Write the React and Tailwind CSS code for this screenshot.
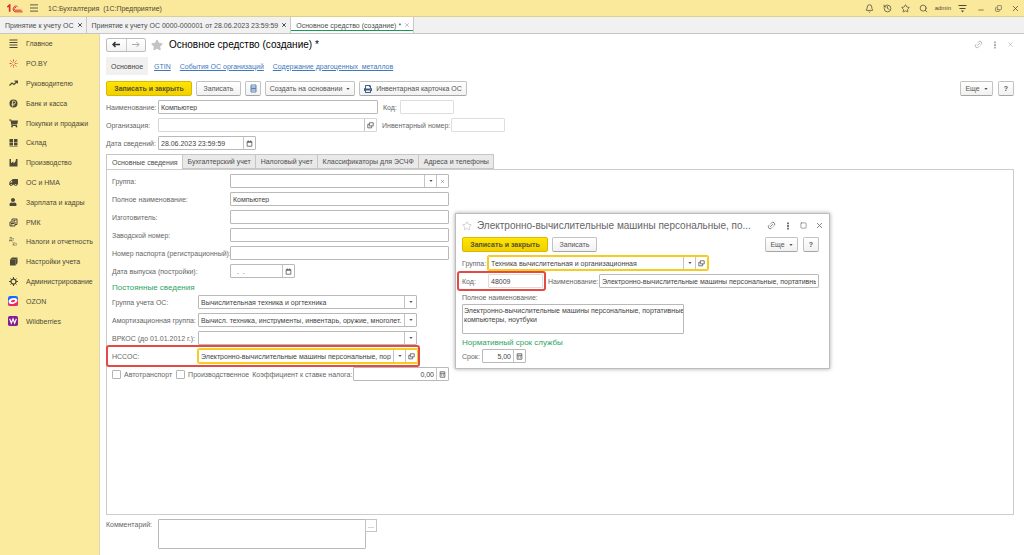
import { useState } from "react";
import { FaShoppingCart, FaTruck, FaUser, FaStar, FaPrint } from "react-icons/fa";
import { Bell, History, Star, Search, Link2, X, Minus, Square, Copy } from "lucide-react";

const input = "w-0 min-w-0 flex-1 h-full bg-transparent px-[2px] text-[#444] outline-none";
const box = "flex h-[14px] min-w-0 items-stretch overflow-hidden rounded-[1px] border border-[#b9b9b9] bg-white";
const btn = "flex h-[15px] items-center justify-center gap-1 rounded-[2px] border border-[#c2c2c2] border-b-[#a5a5a5] bg-gradient-to-b from-white to-[#f1f1f1] text-[#555]";
const yellowBtn = "flex h-[15px] items-center justify-center rounded-[2px] border border-[#d8b900] bg-gradient-to-b from-[#ffe500] to-[#f0d000] font-bold text-[#5a5030]";

const Svg = ({ children, className = "size-[9px]", view = "0 0 18 18", ...rest }) => (
  <svg viewBox={view} className={className} fill="none" stroke="currentColor" strokeWidth="2" aria-hidden="true" {...rest}>{children}</svg>
);

const Logo = () => (
  <Svg view="0 0 48 26" className="h-[9px] w-[16px] text-[#d8322c]" strokeWidth="3">
    <path d="M1 9l7-6v20" strokeWidth="5" />
    <path d="M32 8a8 9 0 1 0-8 15h23M27 10a4 4 0 1 0-3 8h20" />
  </Svg>
);

const OpenIcon = () => (
  <Svg className="size-[7px]"><path d="M6 2h10v8H6zM6 6H2v9h10v-5" /></Svg>
);
const Caret = () => (
  <Svg view="0 0 8 5" className="h-[2px] w-[4px]" stroke="none"><path d="M0 0h8L4 5z" fill="#555" /></Svg>
);
const CalendarIcon = () => (
  <Svg className="size-[7px]"><path d="M3 4h12v12H3zM3 6h12M6 1v4M12 1v4" /></Svg>
);
const CalcIcon = () => (
  <Svg className="size-[7px]"><path d="M3 2h12v14H3zM3 6h12M6 9h2M10 9h2M6 12h2M10 12h2" /></Svg>
);
const Dots = () => (
  <Svg view="0 0 4 18" className="h-[8px] w-[2px]" stroke="none" fill="currentColor"><path d="M0 1h4v4H0zM0 7h4v4H0zM0 13h4v4H0z" /></Svg>
);

const sections = [
  { name: "Главное", icon: <Svg><path d="M1 2h16M1 7h16M1 12h16M1 17h16" /></Svg> },
  { name: "PO.BY", icon: <Svg className="size-[9px] text-[#dc5140]"><path d="M9 1v5M9 12v5M1 9h5M12 9h5M3 3l4 4M15 3l-4 4M3 15l4-4M15 15l-4-4" strokeDasharray="3 1" /></Svg> },
  { name: "Руководителю", icon: <Svg><path d="M1 13l5-5 4 3 6-6M11 4h6v5" strokeWidth="2.5" /></Svg> },
  { name: "Банк и касса", icon: <Svg><circle cx="9" cy="9" r="8" fill="currentColor" stroke="none" /><path d="M7 15V4h3a3 3 0 0 1 0 6H5M5 12h6" stroke="#fbeb9e" strokeWidth="1.5" /></Svg> },
  { name: "Покупки и продажи", icon: <FaShoppingCart className="size-[9px]" /> },
  { name: "Склад", icon: <Svg stroke="none" fill="currentColor"><path d="M1 2h7v6H1zM10 2h7v6h-7zM1 9h7v6H1zM10 9h7v6h-7zM1 16h16v1H1z" /></Svg> },
  { name: "Производство", icon: <Svg stroke="none" fill="currentColor"><path d="M1 17V2h3v8l5-3v4l4-4 1-5h3v15z" /></Svg> },
  { name: "ОС и НМА", icon: <FaTruck className="size-[9px] -scale-x-100" /> },
  { name: "Зарплата и кадры", icon: <FaUser className="size-[8px]" /> },
  { name: "РМК", icon: <Svg><path d="M2 8h10v8H2zM6 7V2h10v11h-4M9 5h4M4 11h6M4 14h3" /></Svg> },
  { name: "Налоги и отчетность", icon: <Svg className="size-[9px]" stroke="none" fill="currentColor"><text x="0" y="8" fontSize="9">Дт</text><text x="7" y="17" fontSize="9">Кт</text></Svg> },
  { name: "Настройки учета", icon: <Svg stroke="none" fill="currentColor"><path d="M2 5l4-4h11v11l-4 5H2z" /><path d="M3 5h10v11M13 5l3-3" stroke="#9b905f" strokeWidth="1" fill="none" /></Svg> },
  { name: "Администрирование", icon: <Svg><circle cx="9" cy="9" r="5" strokeWidth="2.5" /><path d="M9 0v4M9 14v4M0 9h4M14 9h4M3 3l2 2M13 13l2 2M3 15l2-2M13 5l2-2" /></Svg> },
  { name: "OZON", icon: <Svg className="size-[10px]" stroke="none"><rect width="18" height="18" rx="4" fill="#1769ff" /><path d="M0 12L18 6v8a4 4 0 0 1-4 4H4a4 4 0 0 1-4-4z" fill="#f3265f" /><ellipse cx="9" cy="9" rx="8" ry="5" fill="#fff" transform="rotate(-15 9 9)" /><ellipse cx="9" cy="9" rx="4" ry="2" fill="#f3265f" transform="rotate(-15 9 9)" /></Svg> },
  { name: "Wildberries", icon: <Svg className="size-[10px]"><rect width="18" height="18" rx="3" fill="#851f8d" stroke="none" /><path d="M3 5l3 8 3-8 3 8 3-8" stroke="#fff" /></Svg> },
];

const openWindows = [
  { title: "Принятие к учету ОС" },
  { title: "Принятие к учету ОС 0000-000001 от 28.06.2023 23:59:59" },
  { title: "Основное средство (создание) *", active: true },
];

const tabs = ["Основные сведения", "Бухгалтерский учет", "Налоговый учет", "Классификаторы для ЭСЧФ", "Адреса и телефоны"];

const InnerButton = ({ label, children }) => (
  <button aria-label={label} className="flex w-[12px] shrink-0 items-center justify-center border-l border-[#c4c4c4] text-[#555]">{children}</button>
);

const Field = ({ id, label, labelWidth = "", width = "flex-1", value = "", frame = "border-[#b9b9b9]", inputClass = "", children }) => (
  <div className="flex h-[14px] items-center">
    <label htmlFor={id} className={`shrink-0 ${labelWidth}`}>{label}</label>
    <div className={`${box} ${width} ${frame}`}>
      <input id={id} defaultValue={value} className={`${input} ${inputClass}`} />
      {children}
    </div>
  </div>
);

const TopBar = () => (
  <header className="flex h-[17px] items-center border-b border-[#ddcf8d] bg-[#fbe99b] pl-[7px] pr-[4px] text-[#4d4838]">
    <Logo />
    <button aria-label="Меню" className="ml-[7px]"><Svg className="size-[8px]" strokeWidth="2"><path d="M0 2h18M0 9h18M0 16h18" /></Svg></button>
    <span className="ml-[10px]">1С:Бухгалтерия&nbsp; (1С:Предприятие)</span>
    <div className="ml-auto flex items-center gap-[9px]">
      <button aria-label="Уведомления"><Bell className="size-[9px]" /></button>
      <button aria-label="История"><History className="size-[9px]" /></button>
      <button aria-label="Избранное"><Star className="size-[9px]" /></button>
      <button aria-label="Поиск"><Search className="size-[9px]" /></button>
      <span className="-mx-[2px] text-[6px]">admin</span>
      <button aria-label="Настройки"><Svg><path d="M1 3h16M3 9h12" /><path d="M6 13h6l-3 4z" fill="currentColor" stroke="none" /></Svg></button>
      <button aria-label="Свернуть" className="ml-[1px] pt-1"><Minus className="size-[8px]" /></button>
      <button aria-label="Развернуть" className="ml-[1px]"><Copy className="size-[7px] -scale-y-100" /></button>
      <button aria-label="Закрыть"><X className="size-[9px]" /></button>
    </div>
  </header>
);

const WindowTabs = () => (
  <nav className="flex h-[17px] border-b border-[#c6c6c6] bg-[#f1f1f1] text-[#4d4d4d]">
    {openWindows.map((w) => (
      <div key={w.title} className={`flex items-center gap-[3px] border-r border-[#c9c9c9] pl-[5px] pr-[3px] ${w.active ? "bg-white shadow-[inset_0_-2px_0_#fff,inset_0_-3px_0_#189a55]" : ""}`}>
        <button>{w.title}</button>
        <button aria-label="Закрыть вкладку"><X className={`size-[6px] ${w.active ? "text-[#888]" : ""}`} strokeWidth={w.active ? 2 : 4} /></button>
      </div>
    ))}
  </nav>
);

const Sidebar = () => (
  <aside className="w-[100px] shrink-0 border-r border-[#ddd7b5] bg-[#fbeb9e]">
    <ul className="flex h-[297px] flex-col text-[#4d4838]">
      {sections.map((s) => (
        <li key={s.name} className="flex flex-1 items-center">
          <button className="flex items-center whitespace-nowrap pl-[8px]">
            <span className="mr-[8px] flex w-[10px] justify-center">{s.icon}</span>
            {s.name}
          </button>
        </li>
      ))}
    </ul>
  </aside>
);

const ClassifierDialog = () => (
  <section role="dialog" aria-label="Классификатор" className="absolute left-[355px] top-[179px] w-[375px] border border-[#bdbdbd] bg-white pb-[5px] pl-[6px] pr-[10px] shadow-[0_0_4px_rgba(0,0,0,0.35)]">
    <div className="-mr-[5px] flex h-[23px] items-center text-[#666]">
      <Star className="mr-[5px] size-[10px] shrink-0 text-[#999]" strokeWidth={1} />
      <h2 className="whitespace-nowrap text-[10px] leading-[14px]">Электронно-вычислительные машины персональные, по...</h2>
      <div className="ml-auto flex items-center gap-[8px]">
        <button aria-label="Ссылка"><Link2 className="size-[9px] -rotate-45" /></button>
        <button aria-label="Ещё" className="px-[3px]"><Dots /></button>
        <button aria-label="Развернуть"><Square className="size-[7px]" /></button>
        <button aria-label="Закрыть"><X className="size-[9px]" /></button>
      </div>
    </div>
    <div className="flex gap-[4px]">
      <button className={`${yellowBtn} w-[86px]`}>Записать и закрыть</button>
      <button className={`${btn} w-[45px]`}>Записать</button>
      <div className="ml-auto flex gap-[5px]">
        <button className={`${btn} w-[33px]`}>Еще <Caret /></button>
        <button className={`${btn} w-[16px] font-bold`}>?</button>
      </div>
    </div>
    <div className="mt-[4px] flex flex-col gap-[4px]">
      <Field id="d-group" label="Группа:" labelWidth="w-[26px]" width="w-[220px]" value="Техника вычислительная и организационная" frame="outline outline-[#f5cc22] border-[#f5cc22]">
        <InnerButton label="Выбрать"><Caret /></InnerButton>
        <InnerButton label="Открыть"><OpenIcon /></InnerButton>
      </Field>
      <div className="relative flex">
        <Field id="d-code" label="Код:" labelWidth="w-[26px]" width="w-[55px]" value="48009" frame="border-[#dedede]" />
        <span className="pointer-events-none absolute -left-[5px] -top-[3px] h-[20px] w-[89px] rounded-[3px] border-2 border-[#e34a42]" />
        <div className="ml-[5px] flex-1">
          <Field id="d-name" label="Наименование:" labelWidth="w-[51px]" value="Электронно-вычислительные машины персональные, портативные" />
        </div>
      </div>
    </div>
    <label htmlFor="d-full" className="mt-[5px] block">Полное наименование:</label>
    <textarea id="d-full" className="mt-[2px] block h-[30px] w-[222px] resize-none overflow-hidden whitespace-pre rounded-[1px] border border-[#b9b9b9] py-[1px] pl-[1px] leading-[9px] text-[#444] outline-none" defaultValue={"Электронно-вычислительные машины персональные, портативные\nкомпьютеры, ноутбуки"} />
    <h3 className="mt-[3px] text-[8px] leading-[12px] text-[#2aa55f]">Нормативный срок службы</h3>
    <Field id="d-term" label="Срок:" labelWidth="w-[20px]" width="w-[44px]" value="5,00" inputClass="text-right">
      <InnerButton label="Калькулятор"><CalcIcon /></InnerButton>
    </Field>
  </section>
);

const MainInfo = () => (
  <div className="flex flex-col gap-[4px]">
    <Field id="group" label="Группа:" labelWidth="w-[118px]" width="w-[219px]">
      <InnerButton label="Выбрать"><Caret /></InnerButton>
      <InnerButton label="Очистить"><X className="size-[5px]" /></InnerButton>
    </Field>
    {[
      { id: "full", label: "Полное наименование:", value: "Компьютер" },
      { id: "maker", label: "Изготовитель:" },
      { id: "serial", label: "Заводской номер:" },
      { id: "passport", label: "Номер паспорта (регистрационный):" },
    ].map((f) => (
      <Field key={f.id} {...f} labelWidth="w-[118px] whitespace-nowrap" width="w-[219px]" />
    ))}
    <Field id="made" label="Дата выпуска (постройки):" labelWidth="w-[118px]" width="w-[65px]" value="  .  ." inputClass="whitespace-pre">
      <InnerButton label="Календарь"><CalendarIcon /></InnerButton>
    </Field>
  </div>
);

const ConstantInfo = () => (
  <div className="flex flex-col gap-[4px]">
    {[
      { id: "acc", label: "Группа учета ОС:", value: "Вычислительная техника и оргтехника" },
      { id: "amort", label: "Амортизационная группа:", value: "Вычисл. техника, инструменты, инвентарь, оружие, многолет. насаждения" },
      { id: "vrkos", label: "ВРКОС (до 01.01.2012 г.):" },
    ].map((f) => (
      <Field key={f.id} {...f} labelWidth="w-[86px] whitespace-nowrap" width="w-[219px]">
        <InnerButton label="Выбрать"><Caret /></InnerButton>
      </Field>
    ))}
    <div className="relative w-[308px]">
      <Field id="nssos" label="НССОС:" labelWidth="w-[86px]" width="w-[220px]" value="Электронно-вычислительные машины персональные, портативные" frame="outline outline-[#f5cc22] border-[#f5cc22]">
        <InnerButton label="Выбрать"><Caret /></InnerButton>
        <InnerButton label="Открыть"><OpenIcon /></InnerButton>
      </Field>
      <span className="pointer-events-none absolute -left-[6px] -top-[4px] right-0 h-[22px] rounded-[3px] border-2 border-[#e34a42]" />
    </div>
    <div className="flex w-[337px] items-center whitespace-nowrap">
      <label className="flex items-center gap-[3px]">
        <input type="checkbox" className="size-[9px] appearance-none rounded-[1px] border border-[#b5b5b5]" /> Автотранспорт
      </label>
      <label className="ml-[4px] flex items-center gap-[3px]">
        <input type="checkbox" className="size-[9px] appearance-none rounded-[1px] border border-[#b5b5b5]" /> Производственное
      </label>
      <div className="ml-[3px] min-w-0 flex-1">
        <Field id="coef" label="Коэффициент к ставке налога:" labelWidth="pr-[1px]" value="0,00" inputClass="text-right">
          <InnerButton label="Калькулятор"><CalcIcon /></InnerButton>
        </Field>
      </div>
    </div>
  </div>
);

const App = () => {
  const [tab, setTab] = useState(tabs[0]);

  return (
    <div className="flex min-h-screen flex-col bg-white font-['Liberation_Sans',Arial,sans-serif] text-[7px] leading-[9px] text-[#666]">
      <TopBar />
      <WindowTabs />
      <div className="flex flex-1">
        <Sidebar />
        <main className="relative flex min-w-0 flex-1 flex-col pb-[6px] pl-[6px] pr-[10px]">
          <div className="flex h-[21px] items-center">
            <div className="flex h-[14px] w-[40px] rounded-[2px] border border-[#bcbcbc] bg-gradient-to-b from-white to-[#f3f3f3]">
              <button aria-label="Назад" className="flex flex-1 items-center justify-center border-r border-[#ccc] text-[#333]"><Svg strokeWidth="3"><path d="M2 9h14M7 4L2 9l5 5" /></Svg></button>
              <button aria-label="Вперед" className="flex flex-1 items-center justify-center text-[#aaa]"><Svg><path d="M2 9h14M11 4l5 5-5 5" /></Svg></button>
            </div>
            <FaStar className="ml-[5px] mr-[6px] size-[12px] text-[#c4c4c4]" />
            <h1 className="text-[10px] leading-[14px] text-black">Основное средство (создание) *</h1>
            <div className="ml-auto flex items-center gap-[11px] text-[#aaa]">
              <button aria-label="Ссылка"><Link2 className="size-[9px] -rotate-45" /></button>
              <button aria-label="Ещё"><Dots /></button>
              <button aria-label="Закрыть"><X className="size-[7px]" /></button>
            </div>
          </div>

          <nav className="mt-[2px] flex h-[18px] items-center gap-[9px] text-[#3f78bd]">
            <a href="#main" className="-mr-[3px] flex h-full w-[42px] items-center justify-center rounded-[1px] bg-[#f1f1f1] text-[#444]">Основное</a>
            <a href="#gtin" className="underline">GTIN</a>
            <a href="#events" className="underline">События ОС организаций</a>
            <a href="#metals" className="underline">Содержание драгоценных&nbsp; металлов</a>
          </nav>

          <div className="mt-[6px] flex gap-[4px]">
            <button className={`${yellowBtn} w-[86px]`}>Записать и закрыть</button>
            <button className={`${btn} w-[45px]`}>Записать</button>
            <button aria-label="Список" className={`${btn} w-[16px]`}><Svg view="0 0 14 18" className="h-[9px] w-[7px] text-[#5f83ad]"><path d="M2 2h10v14H2zM2 6h10M2 9h10M2 12h10" /></Svg></button>
            <button className={`${btn} w-[90px]`}>Создать на основании <Caret /></button>
            <button className={`${btn} w-[108px]`}><FaPrint className="size-[8px] text-[#415f85]" /> Инвентарная карточка ОС</button>
            <div className="ml-auto flex gap-[5px]">
              <button className={`${btn} w-[33px]`}>Еще <Caret /></button>
              <button className={`${btn} w-[16px] font-bold`}>?</button>
            </div>
          </div>

          <div className="mt-[4px] flex flex-col gap-[4px]">
            <div className="flex gap-[5px]">
              <Field id="name" label="Наименование:" labelWidth="w-[52px]" width="w-[220px]" value="Компьютер" />
              <Field id="code" label="Код:" labelWidth="w-[17px]" width="w-[54px]" frame="border-[#dedede]" />
            </div>
            <div className="flex gap-[5px]">
              <Field id="org" label="Организация:" labelWidth="w-[52px]" width="w-[219px]" frame="border-[#d6d6d6]">
                <InnerButton label="Открыть"><OpenIcon /></InnerButton>
              </Field>
              <Field id="inv" label="Инвентарный номер:" labelWidth="w-[69px]" width="w-[54px]" frame="border-[#dedede]" />
            </div>
            <Field id="date" label="Дата сведений:" labelWidth="w-[52px]" width="w-[98px]" value="28.06.2023 23:59:59">
              <InnerButton label="Календарь"><CalendarIcon /></InnerButton>
            </Field>
          </div>

          <div role="tablist" className="mt-[4px] flex h-[15px]">
            {tabs.map((t) => (
              <button key={t} role="tab" aria-selected={t === tab} onClick={() => setTab(t)}
                className={`-mr-px border border-[#c6c6c6] pl-[5px] pr-[4px] text-[#4d4d4d] ${t === tab ? "-mb-px border-b-white bg-white" : "bg-[#e9e9e9]"}`}>
                {t}
              </button>
            ))}
          </div>
          <div role="tabpanel" className="flex-1 border border-[#cdcdcd] px-[5px] pt-[4px]">
            <MainInfo />
            <h3 className="mb-[1px] mt-[4px] text-[8px] leading-[12px] text-[#2aa55f]">Постоянные сведения</h3>
            <ConstantInfo />
          </div>

          <div className="mt-[4px] flex items-start">
            <label htmlFor="comment" className="w-[52px] pt-[1px]">Комментарий:</label>
            <textarea id="comment" className="h-[30px] w-[208px] resize-none rounded-[1px] border border-[#b9b9b9] outline-none" />
            <button aria-label="Изменить" className="-ml-px h-[13px] w-[12px] border border-[#c4c4c4]">...</button>
          </div>

          <ClassifierDialog />
        </main>
      </div>
    </div>
  );
};

export default App;
